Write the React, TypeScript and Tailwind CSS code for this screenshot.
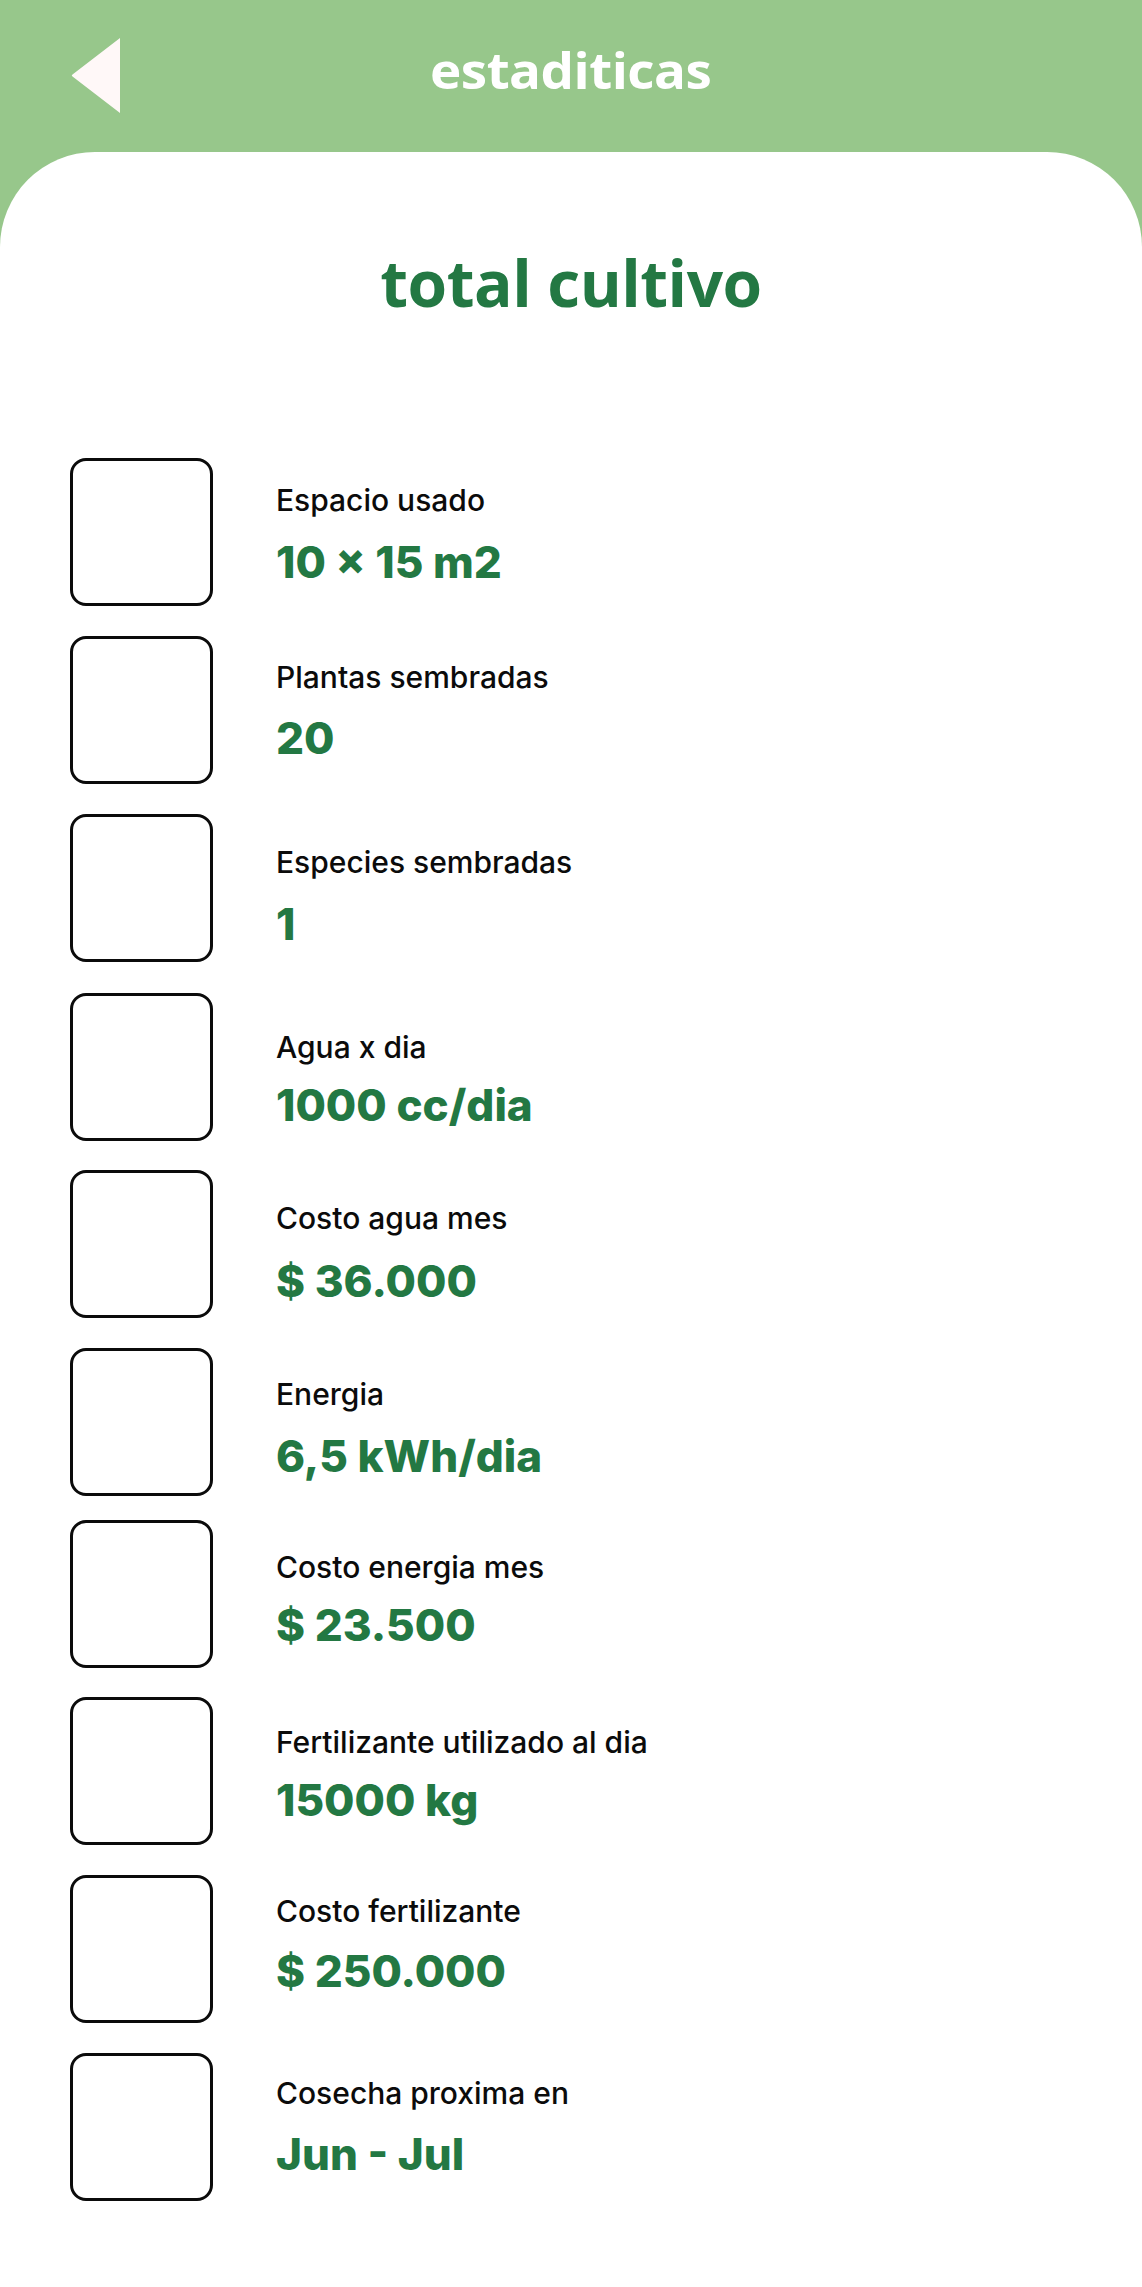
import React from "react";

type Row = { label: string; value: string; mt: string; pt: string; gap: string };

const rows: Row[] = [
  { label: "Espacio usado", value: "10 × 15 m2", mt: "mt-0", pt: "pt-[24.2px]", gap: "mt-[18px]" },
  { label: "Plantas sembradas", value: "20", mt: "mt-[30.3px]", pt: "pt-[22.6px]", gap: "mt-[17px]" },
  { label: "Especies sembradas", value: "1", mt: "mt-[29.7px]", pt: "pt-[29.9px]", gap: "mt-[18px]" },
  { label: "Agua x dia", value: "1000 cc/dia", mt: "mt-[30.7px]", pt: "pt-[36.2px]", gap: "mt-[14px]" },
  { label: "Costo agua mes", value: "$ 36.000", mt: "mt-[29px]", pt: "pt-[30.8px]", gap: "mt-[18.4px]" },
  { label: "Energia", value: "6,5 kWh/dia", mt: "mt-[30px]", pt: "pt-[28.8px]", gap: "mt-[18px]" },
  { label: "Costo energia mes", value: "$ 23.500", mt: "mt-[24.6px]", pt: "pt-[29.2px]", gap: "mt-[13.7px]" },
  { label: "Fertilizante utilizado al dia", value: "15000 kg", mt: "mt-[29px]", pt: "pt-[26.6px]", gap: "mt-[14px]" },
  { label: "Costo fertilizante", value: "$ 250.000", mt: "mt-[30px]", pt: "pt-[18.2px]", gap: "mt-[16px]" },
  { label: "Cosecha proxima en", value: "Jun - Jul", mt: "mt-[29.7px]", pt: "pt-[22.2px]", gap: "mt-[17px]" },
];

export default function App() {
  return (
    <div className="min-h-[2287px] w-full bg-[#97c78b]">
      <header className="relative flex h-[152px] items-start justify-center">
        <svg
          className="absolute left-[71px] top-[38px]"
          width="50"
          height="75"
          viewBox="0 0 50 75"
        >
          <path d="M49 0 L49 75 L1.5 38.5 Q0 37.5 1.5 36.5 Z" fill="#fff8f8" />
        </svg>
        <h1 className="mt-[39px] text-[50px] leading-[62px] font-bold text-white tracking-[-0.5px] [font-family:'Open_Sans',sans-serif] scale-x-[1.06]">
          estaditicas
        </h1>
      </header>
      <main className="min-h-[2135px] rounded-t-[95px] bg-white pt-[98px]">
        <h2 className="text-center text-[64px] leading-[66px] font-bold text-[#237843] [font-family:'Open_Sans',sans-serif] tracking-[-0.5px]">
          total cultivo
        </h2>
        <div className="mt-[142px] flex flex-col pl-[70px] pb-[84px]">
          {rows.map((r) => (
            <div key={r.label} className={`flex items-start ${r.mt}`}>
              <div className="h-[148px] w-[143px] shrink-0 rounded-[16px] border-[3px] border-[#0b0b0b]" />
              <div className={`ml-[63px] flex flex-col ${r.pt}`}>
                <div className="text-[30px] leading-[36px] font-medium text-[#0b0b0b] [font-family:Inter,sans-serif]">
                  {r.label}
                </div>
                <div className={`${r.gap} text-[44px] leading-[52px] font-extrabold text-[#237843] [font-family:Inter,sans-serif]`}>
                  {r.value}
                </div>
              </div>
            </div>
          ))}
        </div>
      </main>
    </div>
  );
}
